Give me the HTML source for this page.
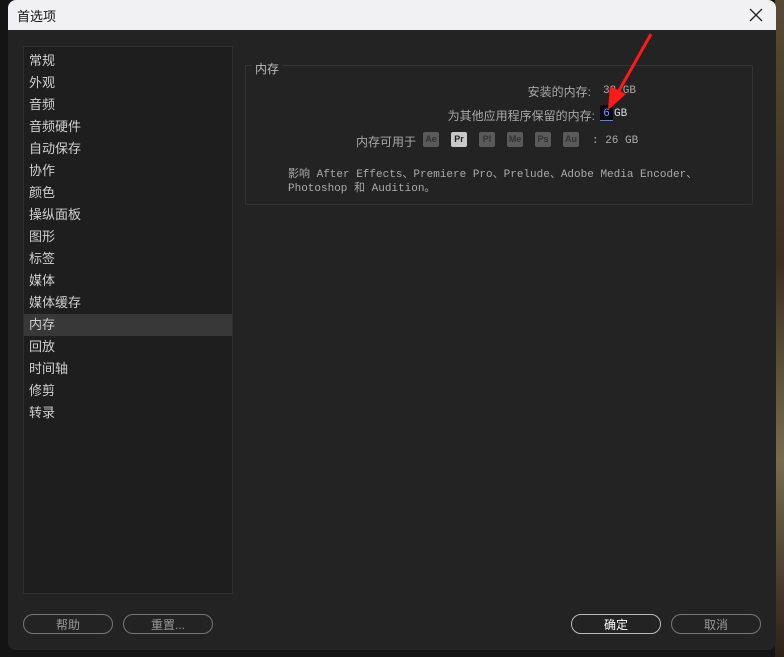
<!DOCTYPE html>
<html><head><meta charset="utf-8"><style>
*{margin:0;padding:0;box-sizing:border-box}
body{width:784px;height:657px;background:#141414;position:relative;overflow:hidden;font-family:"Liberation Sans","Noto Sans CJK SC",sans-serif;font-size:12px}
.bgr{position:absolute;left:775px;top:0;width:9px;height:657px;background:linear-gradient(#5a4a35,#3a3020 40%,#7a6a50 70%,#2a2218)}
.win{position:absolute;left:8px;top:0;width:768px;height:650px;background:#232323;border-radius:8px;overflow:hidden}
.title{position:absolute;left:0;top:0;width:100%;height:30px;background:#f1f1f3;color:#111;font-size:13px}
.title span{position:absolute;left:9px;top:6px}
.x{position:absolute;right:12px;top:7px;width:16px;height:16px}
.side{position:absolute;left:15px;top:46px;width:210px;height:548px;background:#1e1e1e;border:1px solid #2e2e2e;padding-top:3px}
.side div{height:22px;line-height:22px;padding-left:5px;color:#d0d0d0;font-size:13px}
.side .sel{background:#383838}
.grp{position:absolute;left:237px;top:65px;width:508px;height:140px;border:1px solid #333;border-radius:2px}
.gl{position:absolute;left:252px;top:60px;background:#232323;color:#bbb;font-size:12px;padding:0 3px}
.t{position:absolute;color:#a8a8a8;font-size:12px;white-space:nowrap}
.m{font-family:"Liberation Mono","Noto Sans CJK SC",monospace;font-size:11px;color:#aaa}
.ic{position:absolute;top:132px;width:16px;height:15px;background:#5a5a5a;color:#333;font-size:9px;font-weight:bold;text-align:center;line-height:15px;border-radius:2px}
.btn{position:absolute;top:614px;height:20px;border:1px solid #777;border-radius:10px;color:#999;text-align:center;line-height:20px;font-size:12px}
</style></head><body>
<div class="bgr"></div>
<div class="win">
<div class="title"><span>首选项</span>
<svg class="x" viewBox="0 0 16 16"><path d="M2 2L14 14M14 2L2 14" stroke="#222" stroke-width="1.3"/></svg></div>
<div class="side">
<div>常规</div><div>外观</div><div>音频</div><div>音频硬件</div><div>自动保存</div><div>协作</div><div>颜色</div><div>操纵面板</div><div>图形</div><div>标签</div><div>媒体</div><div>媒体缓存</div><div class="sel">内存</div><div>回放</div><div>时间轴</div><div>修剪</div><div>转录</div>
</div>
<div class="grp"></div>
</div>
<div class="gl">内存</div>
<div class="t" style="right:193px;top:83px">安装的内存:</div><div class="t m" style="left:603px;top:85px">32 GB</div>
<div class="t" style="right:189px;top:107px">为其他应用程序保留的内存:</div>
<div style="position:absolute;left:600px;top:105px;width:13px;height:16px;background:#0a0a14;border-bottom:1px solid #5080ff;color:#7aa0ff;font-size:11px;text-align:center;line-height:16px">6</div>
<div class="t m" style="left:614px;top:108px;color:#ddd">GB</div>
<div class="t" style="left:356px;top:133px">内存可用于</div>
<div class="ic" style="left:423px">Ae</div><div class="ic" style="left:451px;background:#c8c8c8;color:#222">Pr</div><div class="ic" style="left:479px">Pl</div><div class="ic" style="left:507px">Me</div><div class="ic" style="left:535px">Ps</div><div class="ic" style="left:563px">Au</div>
<div class="t m" style="left:592px;top:135px">: 26 GB</div>
<div class="t m" style="left:288px;top:168px;line-height:14px">影响 After Effects、Premiere Pro、Prelude、Adobe Media Encoder、<br>Photoshop 和 Audition。</div>
<svg style="position:absolute;left:596px;top:30px" width="60" height="84"><path d="M55 4L20 66" stroke="#ff1a1a" stroke-width="3"/><path d="M12 80L14 56L30 64Z" fill="#ff1a1a"/></svg>
<div class="btn" style="left:23px;width:90px">帮助</div>
<div class="btn" style="left:123px;width:90px">重置...</div>
<div class="btn" style="left:571px;width:90px;border-color:#bbb;color:#fff">确定</div>
<div class="btn" style="left:671px;width:90px">取消</div>
</body></html>
